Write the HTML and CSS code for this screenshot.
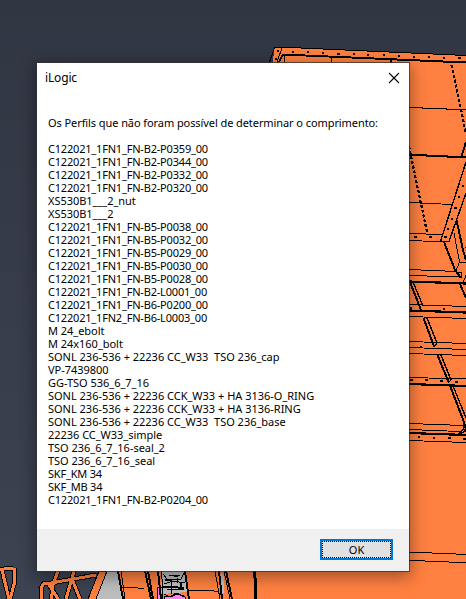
FILE: index.html
```html
<!DOCTYPE html>
<html lang="pt">
<head>
<meta charset="utf-8">
<title>iLogic</title>
<link rel="stylesheet" href="styles.css">
</head>
<body>
<svg class="scene" width="466" height="599" viewBox="0 0 466 599" aria-hidden="true">
  <g class="solid">
    <path d="M274 47.500H290L466 56V599H118V300H260Z"/>
    <path class="gray" d="M106 571H119L123 599H96Z"/>
  </g>
  <!-- trusses: dark casing under an orange core -->
  <path class="casing" d="M0 569.500L13 568M14 568L15 581L10 599M2 570L9 599M42 599L41 588L44 583L51 583L53 590L51 599M48 583L58 599M58 571L51 590M51 583L96 575M74 571L66 599M72 579L80 599"/>
  <path class="core" d="M0 569.500L13 568M14 568L15 581L10 599M2 570L9 599M42 599L41 588L44 583L51 583L53 590L51 599M48 583L58 599M58 571L51 590M51 583L96 575M74 571L66 599M72 579L80 599"/>
  <path class="solid edge" d="M99 571H107L96 599H88Z"/>
  <!-- machinery -->
  <path class="gray" d="M162 571H185L187 592L161 594ZM221 573L224 576V592L222 597L219 580Z"/>
  <path class="pink" d="M157 587L162 588L163 599H157ZM164 596L171 597L177 594L185 597V599H164Z"/>
  <g class="line">
    <path d="M122 587.500H132L144 588.500M187 590.500H208L219 591.500M163 574L167 579H181L184 573M169 575H180M164 584L173 581L185 583M167 589H184M171 582V594M177 578V583M164 594L170 597L176 593L184 596M215 571L220 599M224 571L230 599M161 571L163 587M121 571L125 599"/>
    <path class="bold" d="M118 571L123 599M145 571L151 599M148 571L153 599M158 571L161 599M185 571L189 599M219 571L222 599M226 571L232 599M162 587H171L184 588M165 580H172M174 576H178M181 583V587"/>
    <path class="heavy" d="M254.500 571L255.500 585V599"/>
  </g>
  <!-- top flange -->
  <g class="line">
    <path d="M269.500 62L274.500 47.500H290L466 55.500M282 48L277 62M284 54V62M331.500 57V62"/>
    <path class="bold" d="M282.500 54.500L466 62.500M279 62L283 54M391 60V63"/>
    <path class="dash" d="M451.500 65L460.700 108L466 134"/>
    <path class="dash" d="M409 146L416 180L427 232"/>
    <path d="M409 107.500H421L424 108.500H445L448 109.500H466M409 202.500L452 204.500"/>
    <path class="bold" d="M409 155H425L428 156H446L449 157H466"/>
    <!-- inclined flange -->
    <path class="rim" d="M466 162L440.500 241.500H449L466 193"/>
    <path d="M409 233.500L442 234.500M409 240.500L449 242M454 233L459.500 262H466M459.500 262L456 271M465 247H466M466 275L463 283"/>
    <path class="bold" d="M466 142L461 158M444 242L455 270L461 278M456.500 220L463 250L466 260"/>
    <circle cx="460" cy="274.500" r="2"/>
    <!-- shelves -->
    <path d="M409 269.500L457 271.500M409 275.500L462 277M409 304.500L466 306.500M409 316.500L466 318.500M409 341.500L466 343.500M409 347.500L466 349.500M409 353.500L466 355.500M409 377.500L466 379M409 423.500L463 425.500M409 429.500L460 431.500M409 440.500L466 442.500"/>
    <path class="shelf" d="M409 281.500L466 283.500M409 310.500L466 312.500M409 384L466 386M409 433L466 435"/>
    <!-- diagonal braces -->
    <path class="rim" d="M413 282L423 306M427 318L437 343L434 347M441 355L451 380L448 383M453.500 387L466 418M464 422V428L459 434M466 424L465 431L460 434"/>
    <path class="bold" d="M410 282L421 310M460 284L466 298M423.500 318L434 346M437.500 355L448.500 382M450.500 387L464 422"/>
    <path d="M409 552.500H431L433 553.500H455L457 554.500H466M409 560.500H424L426 561.500H448L450 562.500H466"/>
    <!-- bolts -->
    <path class="dots" d="M277 51h2M275 59h2M292 52h2M307 52h2M322 53h2M337 54h3M353 54h2M367 55h2M383 55h2M398 56h2M413 57h2M428 57h2M443 58h2M458 58h3M462 186h2M458 197h2M454 208h3M451 219h2M447 229h2M444 237h3M414 237h3M429 237h3M410 308h2M443 309h2M420 347h2M410 380h3M425 380h3M440 381h3M455 382h3M418 437h2M433 438h2M448 438h3M463 439h3"/>
  </g>
</svg>

<main class="dialog">
  <header class="titlebar">
    <h1>iLogic</h1>
    <svg class="close" width="12" height="12" viewBox="0 0 12 12" aria-label="Fechar"><path d="M1 1L11 11M11 1L1 11"/></svg>
  </header>
  <section class="content">
    <p class="lead">Os Perfils que não foram possível de determinar o comprimento:</p>
    <ul>
      <li>C122021_1FN1_FN-B2-P0359_00</li>
      <li>C122021_1FN1_FN-B2-P0344_00</li>
      <li>C122021_1FN1_FN-B2-P0332_00</li>
      <li>C122021_1FN1_FN-B2-P0320_00</li>
      <li class="part">XS530B1___2_nut</li>
      <li class="part">XS530B1___2</li>
      <li>C122021_1FN1_FN-B5-P0038_00</li>
      <li>C122021_1FN1_FN-B5-P0032_00</li>
      <li>C122021_1FN1_FN-B5-P0029_00</li>
      <li>C122021_1FN1_FN-B5-P0030_00</li>
      <li>C122021_1FN1_FN-B5-P0028_00</li>
      <li>C122021_1FN1_FN-B2-L0001_00</li>
      <li>C122021_1FN1_FN-B6-P0200_00</li>
      <li>C122021_1FN2_FN-B6-L0003_00</li>
      <li class="part">M 24_ebolt</li>
      <li class="part">M 24x160_bolt</li>
      <li class="assembly">SONL 236-536 + 22236 CC_W33&nbsp; TSO 236_cap</li>
      <li class="part">VP-7439800</li>
      <li class="part">GG-TSO 536_6_7_16</li>
      <li class="assembly">SONL 236-536 + 22236 CCK_W33 + HA 3136-O_RING</li>
      <li class="assembly">SONL 236-536 + 22236 CCK_W33 + HA 3136-RING</li>
      <li class="assembly">SONL 236-536 + 22236 CC_W33&nbsp; TSO 236_base</li>
      <li class="part">22236 CC_W33_simple</li>
      <li class="part">TSO 236_6_7_16-seal_2</li>
      <li class="part">TSO 236_6_7_16_seal</li>
      <li>SKF_KM 34</li>
      <li>SKF_MB 34</li>
      <li>C122021_1FN1_FN-B2-P0204_00</li>
    </ul>
  </section>
  <footer><button type="button"><span>OK</span></button></footer>
</main>
</body>
</html>
```
FILE: styles.css
```css
* { box-sizing: border-box; }
body {
  margin: 0;
  width: 466px;
  height: 599px;
  overflow: hidden;
  padding: 63px 57px 0 37px;
  background: linear-gradient(#313643, #3c4351);
  font-family: "Noto Sans", "Open Sans", sans-serif;
  color: #000;
}
.scene { position: absolute; left: 0; top: 0; shape-rendering: crispEdges; }
.solid { fill: #ff8040; }
.gray { fill: #bdbdbd; }
.pink { fill: #ff80ff; stroke: #000; stroke-width: 1; }
.edge { stroke: #000; stroke-width: 1; }
.casing { fill: none; stroke: #000; stroke-width: 5; }
.core { fill: none; stroke: #ff8040; stroke-width: 3; }
.line { fill: none; stroke: #000; stroke-width: 1; }
.rim { stroke-width: 1.4; }
.bold { stroke-width: 2; }
.shelf { stroke-width: 2.2; }
.heavy { stroke-width: 3; }
.dash { stroke-width: 2.2; stroke-dasharray: 3 2; }
.dots { stroke-width: 2; }

.dialog {
  position: relative;
  width: 372px;
  height: 508px;
  display: flex;
  flex-direction: column;
  background: #fff;
  box-shadow: 0 0 0 1px rgba(50, 50, 50, .75), 0 4px 15px 2px rgba(0, 0, 0, .38);
}
.titlebar {
  display: flex;
  justify-content: space-between;
  align-items: center;
  height: 29px;
  padding: 0 9px 0 8px;
}
h1 { margin: 0; font-size: 12px; font-weight: 400; line-height: 29px; letter-spacing: -.15px; }
.close { fill: none; stroke: #000; stroke-width: 1.1; }
.content { flex: 1; padding: 24px 0 0 11px; font-size: 11px; line-height: 13px; white-space: nowrap; }
.lead { margin: 0 0 13px; letter-spacing: -.08px; }
ul { list-style: none; margin: 0; padding: 0; letter-spacing: -.19px; }
.part { letter-spacing: -.03px; }
.assembly { letter-spacing: -.01px; }
footer { height: 42px; padding: 10px 16px 0 0; display: flex; justify-content: flex-end; background: #f0f0f0; }
button {
  width: 73px;
  height: 21px;
  padding: 0;
  border: 2px solid #0078d7;
  background: #e1e1e1;
  font: 11px/15px "Noto Sans", sans-serif;
  color: #000;
}
button span { display: block; height: 17px; border: 1px dotted #000; }
```
